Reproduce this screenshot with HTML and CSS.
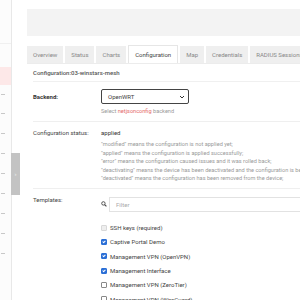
FILE: index.html
```html
<!DOCTYPE html>
<html lang="en">
  <head>
    <meta charset="UTF-8" />
    <title>Change device - OpenWISP</title>
    <link rel="stylesheet" href="styles.css">
  </head>

  <body>
    <aside class="sidebar">
      <div class="sidebar-logo"></div>
      <ul class="menu">
        <li class="menu-item active"></li>
        <li class="menu-item first"><span></span></li>
        <li class="menu-item"><span></span></li>
        <li class="menu-item"><span></span></li>
        <li class="menu-item"><span></span></li>
        <li class="menu-item"><span></span></li>
        <li class="menu-item"><span></span></li>
        <li class="menu-item"><span></span></li>
        <li class="menu-item"><span></span></li>
        <li class="menu-item"><span></span></li>
      </ul>
      <button class="menu-toggle" type="button">&rsaquo;</button>
    </aside>

    <main class="main">
      <div class="page-header"></div>

      <nav class="tabs">
        <a class="tab">Overview</a>
        <a class="tab">Status</a>
        <a class="tab">Charts</a>
        <a class="tab active">Configuration</a>
        <a class="tab">Map</a>
        <a class="tab">Credentials</a>
        <a class="tab">RADIUS Sessions</a>
      </nav>

      <section class="panel">
        <h2 class="panel-title">Configuration:03-winstars-mesh</h2>

        <div class="form-row backend-row">
          <label class="field-label required">Backend:</label>
          <div class="field">
            <div class="select">
              <span>OpenWRT</span>
              <svg width="6" height="4" viewBox="0 0 6 4">
                <path d="M1 1 L3 3 L5 1" fill="none" stroke="#333" stroke-width="1" />
              </svg>
            </div>
            <div class="help">Select <a>netjsonconfig</a> backend</div>
          </div>
        </div>

        <div class="form-row status-row">
          <label class="field-label">Configuration status:</label>
          <div class="field">
            <div class="value">applied</div>
            <div class="help lines">
              <div>"modified" means the configuration is not applied yet;</div>
              <div>"applied" means the configuration is applied successfully;</div>
              <div>"error" means the configuration caused issues and it was rolled back;</div>
              <div>"deactivating" means the device has been deactivated and the configuration is being removed;</div>
              <div>"deactivated" means the configuration has been removed from the device;</div>
            </div>
          </div>
        </div>

        <div class="form-row templates-row">
          <label class="field-label">Templates:</label>
          <div class="field">
            <div class="filter">
              <svg class="search-icon" width="6" height="6" viewBox="0 0 6 6">
                <circle cx="2.4" cy="2.4" r="1.7" fill="none" stroke="#444" stroke-width="0.9" />
                <path d="M3.6 3.6 L5.4 5.4" stroke="#444" stroke-width="1.1" />
              </svg>
              <div class="filter-input">Filter</div>
            </div>
            <ul class="template-list">
              <li><span class="check disabled"></span>SSH keys (required)</li>
              <li><span class="check checked"></span>Captive Portal Demo</li>
              <li><span class="check checked"></span>Management VPN (OpenVPN)</li>
              <li><span class="check checked"></span>Management Interface</li>
              <li><span class="check"></span>Management VPN (ZeroTier)</li>
              <li><span class="check"></span>Management VPN (WireGuard)</li>
            </ul>
          </div>
        </div>
      </section>
    </main>
  </body>
</html>
```

FILE: styles.css
```css
html,
body {
  margin: 0;
  height: 100%;
  overflow: hidden;
}

body {
  display: flex;
  font-family: Roboto, "Liberation Sans", Arial, sans-serif;
  font-size: 6px;
  color: #333;
  background: #fff;
}

.sidebar {
  position: relative;
  width: 11px;
  flex-shrink: 0;
  background: #fcfcfc;
  border-right: 1px solid #e8e8e8;
}

.sidebar-logo {
  height: 43px;
  border-bottom: 1px solid #f0f0f0;
}

.menu {
  list-style: none;
  margin: 23px 0 0 0;
  padding: 0;
}

.menu-item {
  height: 20px;
  display: flex;
  align-items: center;
}

.menu-item.active {
  height: 18px;
  background: #fde8e8;
}

.menu-item.first {
  height: 18px;
}

.menu-item span {
  display: block;
  width: 4px;
  height: 1px;
  margin-left: 1px;
  background: #c8c8c8;
}

.menu-toggle {
  position: absolute;
  left: 11px;
  top: 153px;
  width: 9px;
  height: 42px;
  padding: 0;
  border: none;
  background: #c3c3c3;
  color: #eee;
  font-size: 6px;
  line-height: 42px;
}

.main {
  flex: 1;
  padding: 9px 0 0 15px;
  min-width: 0;
}

.page-header {
  height: 27px;
  background: #f3f3f3;
}

.tabs {
  display: flex;
  gap: 2px;
  margin-top: 9px;
  height: 18px;
  border-bottom: 1px solid #ececec;
  white-space: nowrap;
}

.tab {
  display: block;
  margin-top: 1px;
  padding: 0 6px;
  line-height: 17px;
  background: #efefef;
  color: #888;
}

.tab.active {
  margin-top: 0;
  line-height: 18px;
  background: #fff;
  color: #444;
  border: 1px solid #e6e6e6;
  border-bottom: none;
}

.panel {
  padding-left: 6px;
}

.panel-title {
  margin: 0;
  height: 17px;
  line-height: 17px;
  font-size: 6px;
  font-weight: 500;
  color: #555;
  border-bottom: 1px solid #f0f0f0;
}

.form-row {
  display: grid;
  grid-template-columns: 68px 1fr;
  border-bottom: 1px solid #efefef;
  white-space: nowrap;
}

.field-label {
  color: #444;
}

.field-label.required {
  font-weight: 700;
  color: #333;
}

.help {
  color: #9a9a9a;
  font-size: 5.6px;
}

.help a {
  color: #e46a6a;
}

.backend-row {
  padding: 7px 0 5px;
}

.backend-row .field-label {
  line-height: 15px;
}

.select {
  width: 77px;
  height: 13px;
  border: 1px solid #444;
  border-radius: 2px;
  display: flex;
  align-items: center;
  justify-content: space-between;
  padding: 0 3px 0 6px;
  color: #444;
}

.backend-row .help {
  margin-top: 2px;
  line-height: 10px;
}

.status-row {
  padding: 6px 0 5px;
}

.status-row .field-label,
.status-row .value {
  line-height: 10px;
}

.lines {
  margin-top: 2px;
  line-height: 8.5px;
}

.templates-row {
  padding: 6px 0 0;
  border-bottom: none;
}

.templates-row .field-label {
  line-height: 10px;
}

.filter {
  display: flex;
  align-items: center;
  gap: 2px;
  margin-top: 2px;
}

.search-icon {
  flex-shrink: 0;
}

.filter-input {
  flex: 1;
  height: 13px;
  line-height: 13px;
  padding-left: 6px;
  border: 1px solid #e2e2e2;
  border-right: none;
  color: #aaa;
}

.template-list {
  list-style: none;
  margin: 9px 0 0;
  padding: 0;
}

.template-list li {
  display: flex;
  align-items: center;
  gap: 3px;
  height: 14.3px;
  color: #444;
}

.check {
  width: 4px;
  height: 4px;
  border: 0.8px solid #888;
  border-radius: 1px;
  background: #fff;
  position: relative;
}

.check.disabled {
  border-color: #d8d8d8;
  background: #eee;
}

.check.checked {
  background: #2b6fd6;
  border-color: #2b6fd6;
}

.check.checked::after {
  content: "";
  position: absolute;
  left: 1.3px;
  top: 0.2px;
  width: 1px;
  height: 2px;
  border: solid #fff;
  border-width: 0 0.8px 0.8px 0;
  transform: rotate(45deg);
}
```
